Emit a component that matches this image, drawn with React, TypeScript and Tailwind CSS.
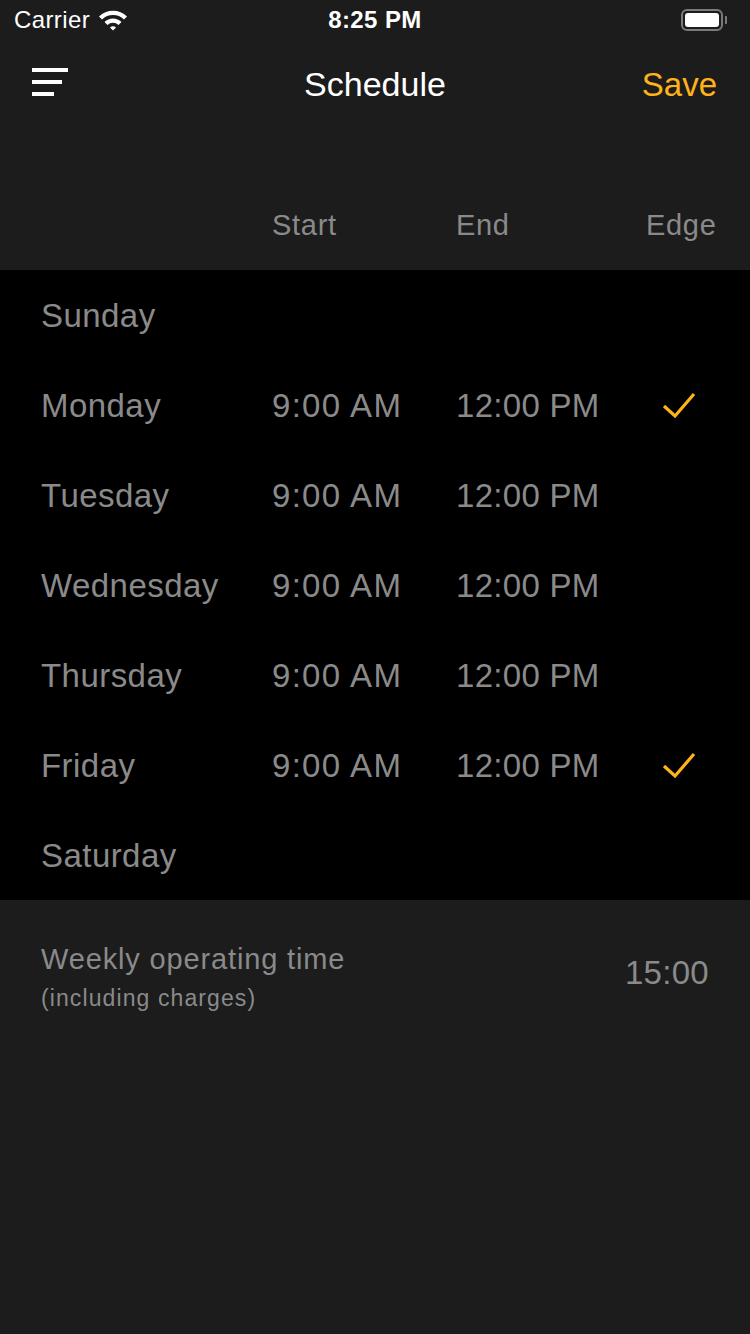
import React from "react";

const font = { fontFamily: '"Liberation Sans", Arial, sans-serif' };

function Check() {
  return (
    <svg width="36" height="28" viewBox="0 0 36 28" className="block">
      <path d="M3 15 L14 25 L33 3" fill="none" stroke="#FFB31A" strokeWidth="3.2" strokeLinecap="butt" strokeLinejoin="miter" />
    </svg>
  );
}

const rows: { day: string; start?: string; end?: string; edge?: boolean }[] = [
  { day: "Sunday" },
  { day: "Monday", start: "9:00 AM", end: "12:00 PM", edge: true },
  { day: "Tuesday", start: "9:00 AM", end: "12:00 PM" },
  { day: "Wednesday", start: "9:00 AM", end: "12:00 PM" },
  { day: "Thursday", start: "9:00 AM", end: "12:00 PM" },
  { day: "Friday", start: "9:00 AM", end: "12:00 PM", edge: true },
  { day: "Saturday" },
];

export default function App() {
  return (
    <div className="w-[750px] h-[1334px] bg-[#1c1c1c] flex flex-col overflow-hidden" style={font}>
      {/* status bar */}
      <div className="h-[40px] flex items-center px-[14px] relative text-white">
        <div className="flex items-center gap-[8px]">
          <span className="text-[24px] leading-none tracking-[0.4px]">Carrier</span>
          <svg width="30" height="22" viewBox="0 0 30 22">
            <path d="M1 7.5 A20 20 0 0 1 29 7.5 L26 10.5 A16 16 0 0 0 4 10.5 Z" fill="#fff" />
            <path d="M6.5 13 A12 12 0 0 1 23.5 13 L20.5 16 A8 8 0 0 0 9.5 16 Z" fill="#fff" />
            <path d="M12 18.5 A4.5 4.5 0 0 1 18 18.5 L15 21.5 Z" fill="#fff" />
          </svg>
        </div>
        <div className="absolute left-0 right-0 top-0 h-[40px] flex items-center justify-center pointer-events-none">
          <span className="text-[24px] font-bold leading-none tracking-[0.4px]">8:25 PM</span>
        </div>
        <div className="ml-auto flex items-center gap-[2px] mr-[9px]">
          <div className="w-[42px] h-[22px] rounded-[6px] border-[2px] border-[#7a7a7a] p-[2px]">
            <div className="w-full h-full bg-white rounded-[3px]" />
          </div>
          <div className="w-[2px] h-[8px] bg-[#7a7a7a] rounded-r-[1px]" />
        </div>
      </div>

      {/* nav bar */}
      <div className="h-[90px] flex items-center justify-between px-[32px] relative">
        <div className="flex flex-col gap-[8px] pb-[6px]">
          <div className="w-[36px] h-[4px] bg-white" />
          <div className="w-[30px] h-[4px] bg-white" />
          <div className="w-[22px] h-[4px] bg-white" />
        </div>
        <div className="absolute left-0 right-0 top-0 bottom-0 flex items-center justify-center pb-[2px]">
          <span className="text-[34px] text-white leading-none">Schedule</span>
        </div>
        <span className="text-[33px] text-[#FFB31A] leading-none mr-[1px] pb-[2px]">Save</span>
      </div>

      {/* column header */}
      <div className="h-[140px] pt-[52px] pl-[41px] grid grid-cols-[231px_184px_190px_68px] items-center text-[29px] text-[#8a8a8a] tracking-[0.7px]">
        <span />
        <span>Start</span>
        <span>End</span>
        <span>Edge</span>
      </div>

      {/* list */}
      <div className="bg-black">
        {rows.map((r) => (
          <div key={r.day} className="h-[90px] pl-[41px] grid grid-cols-[231px_184px_190px_68px] items-center text-[33px] text-[#8a8a8a]">
            <span className="leading-none tracking-[0.45px]">{r.day}</span>
            <span className="leading-none tracking-[1.3px]">{r.start ?? ""}</span>
            <span className="leading-none tracking-[0.3px]">{r.end ?? ""}</span>
            <span className="flex justify-center pr-[2px]">{r.edge ? <Check /> : null}</span>
          </div>
        ))}
      </div>

      {/* footer */}
      <div className="flex items-center justify-between pl-[41px] pr-[41px] pt-[40px]">
        <div className="flex flex-col">
          <span className="text-[29px] text-[#8a8a8a] leading-[38px] tracking-[0.85px]">Weekly operating time</span>
          <span className="text-[23px] text-[#8a8a8a] leading-[40px] tracking-[1.1px]">(including charges)</span>
        </div>
        <span className="text-[33px] text-[#8a8a8a] leading-none pb-[14px] tracking-[0.3px]">15:00</span>
      </div>
    </div>
  );
}
